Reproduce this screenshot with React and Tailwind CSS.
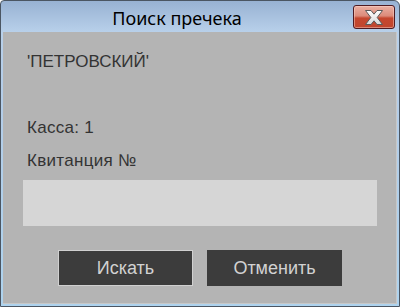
import React from "react";

export default function App() {
  return (
    <div className="w-[400px] h-[307px] border border-[#4b5663] flex flex-col bg-[linear-gradient(to_bottom,#98b2d3_0px,#b8d0ea_31px,#b4cde8_100px,#aed3ee_305px)] rounded-tr-[6px] rounded-tl-[4px] overflow-hidden">
      <div className="h-[31px] flex items-start shrink-0">
        <div
          className="flex-1 text-center pt-[5px] text-[18px] leading-[24px] text-black"
          style={{ fontFamily: '"Noto Sans", "DejaVu Sans", sans-serif' }}
        >
          Поиск пречека
        </div>
        <div className="pt-[4px] pr-[4px]">
          <div className="w-[42px] h-[24px] rounded-[3px] border border-[#4e1b22] bg-[linear-gradient(to_bottom,#eab0a3_0%,#dc8b7a_45%,#c5472f_55%,#c0462e_100%)] flex items-center justify-center shadow-[inset_0_0_0_1px_rgba(255,220,210,0.45)]">
            <svg width="20" height="17" viewBox="0 0 20 17">
              <defs>
                <linearGradient id="xg" x1="0" y1="0" x2="0" y2="1">
                  <stop offset="0" stopColor="#ffffff" />
                  <stop offset="1" stopColor="#d8d8d8" />
                </linearGradient>
              </defs>
              <polygon
                points="1.5,1.5 7,1.5 10,5.2 13,1.5 18.5,1.5 13.2,8.5 18.5,15.5 13,15.5 10,11.8 7,15.5 1.5,15.5 6.8,8.5"
                fill="url(#xg)"
                stroke="#5a5a5a"
                strokeWidth="1"
                strokeLinejoin="round"
              />
            </svg>
          </div>
        </div>
      </div>
      <div
        className="flex-1 mx-[2px] mb-[2px] bg-[#b4b4b4] flex flex-col shadow-[inset_-1px_-1px_0_#c8c8c8]"
        style={{ fontFamily: '"Liberation Sans", Arial, sans-serif' }}
      >
        <div className="pl-[24px] pt-[20px] text-[17px] leading-[20px] text-[#333333]">'ПЕТРОВСКИЙ'</div>
        <div className="pl-[24px] mt-[46px] text-[17px] leading-[20px] tracking-[0.3px] text-[#333333]">Касса: 1</div>
        <div className="pl-[24px] mt-[13px] text-[17px] leading-[20px] tracking-[0.3px] text-[#333333]">Квитанция №</div>
        <div className="mx-[20px] mt-[9px] h-[46px] bg-[#d6d6d6]" />
        <div className="flex justify-center gap-[14px] mt-[24px]">
          <button className="w-[135px] h-[36px] bg-[#3c3c3c] border border-[#d0d0d0] text-[#d2d2d2] text-[18px] leading-[20px]">
            Искать
          </button>
          <button className="w-[135px] h-[36px] bg-[#3c3c3c] text-[#d2d2d2] text-[18px] leading-[20px]">
            Отменить
          </button>
        </div>
      </div>
    </div>
  );
}
